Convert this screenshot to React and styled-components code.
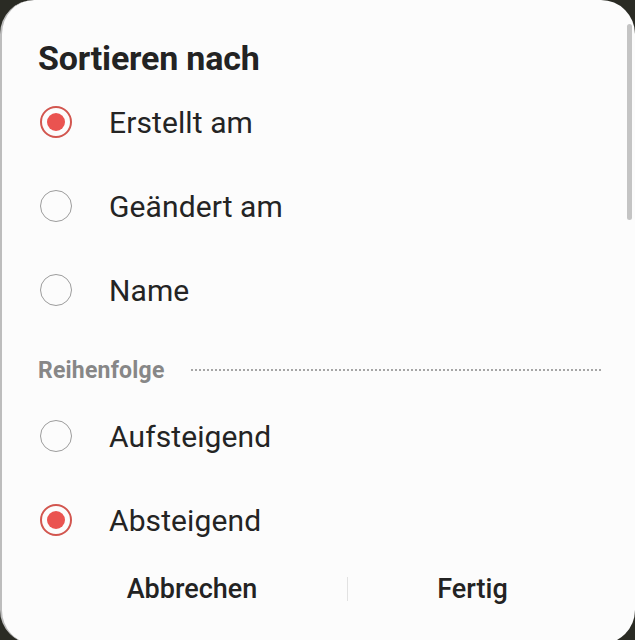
import React, { useState } from "react";
import styled, { createGlobalStyle } from "styled-components";

const Global = createGlobalStyle`
  html, body { margin: 0; padding: 0; background: #2a2b24; }
  body { width: 635px; height: 640px; overflow: hidden; font-family: Roboto, "Noto Sans", Arial, sans-serif; }
  * { box-sizing: border-box; }
`;

const Sheet = styled.div`
  position: relative;
  width: 635px;
  height: 644px;
  background: #fcfcfc;
  border-radius: 34px;
  border-left: 2px solid #bdbdbd;
  display: flex;
  flex-direction: column;
  padding: 37px 32px 0 36px;
`;

const Scrollbar = styled.div`
  position: absolute;
  right: 3px;
  top: 24px;
  width: 5px;
  height: 196px;
  border-radius: 3px;
  background: #c4c4c4;
`;

const Title = styled.h1`
  margin: 0;
  font-size: 34px;
  line-height: 43px;
  font-weight: 700;
  color: #232323;
  letter-spacing: -0.2px;
`;

const List = styled.div`
  display: flex;
  flex-direction: column;
`;

const Row = styled.label`
  display: flex;
  align-items: center;
  height: 84px;
  cursor: pointer;
  padding-left: 2px;
`;

const Radio = styled.span`
  width: 32px;
  height: 32px;
  border-radius: 50%;
  border: ${(p) => (p.$checked ? "2px solid #d2564f" : "1.6px solid #9c9c9c")};
  display: flex;
  align-items: center;
  justify-content: center;
  flex-shrink: 0;
  &::after {
    content: "";
    width: 18px;
    height: 18px;
    border-radius: 50%;
    background: #ea5350;
    display: ${(p) => (p.$checked ? "block" : "none")};
  }
`;

const RowText = styled.span`
  margin-left: 37px;
  font-size: 30px;
  color: #242424;
  letter-spacing: 0.1px;
`;

const SectionHeader = styled.div`
  height: 62px;
  padding-top: 16px;
  display: flex;
  align-items: center;
`;

const SectionTitle = styled.span`
  font-size: 23px;
  font-weight: 700;
  color: #878787;
  line-height: 46px;
  letter-spacing: 0.2px;
`;

const Dots = styled.span`
  flex: 1;
  margin-left: 25px;
  height: 2px;
  background-image: radial-gradient(circle, #a6a6a6 0.8px, transparent 1px);
  background-size: 4px 2px;
  background-repeat: repeat-x;
  margin-top: -3px;
`;

const Buttons = styled.div`
  display: grid;
  grid-template-columns: 310px 1px 1fr;
  align-items: center;
  height: 54px;
  margin-left: -1px;
  margin-right: 6px;
`;

const Btn = styled.button`
  background: none;
  border: none;
  font-family: inherit;
  font-size: 27px;
  font-weight: 500;
  color: #232323;
  height: 54px;
  cursor: pointer;
  padding: 0;
`;

const Divider = styled.span`
  width: 1px;
  height: 24px;
  background: #e2e2e2;
`;

export default function App() {
  const [sort, setSort] = useState("created");
  const [order, setOrder] = useState("desc");
  const sorts = [
    ["created", "Erstellt am"],
    ["changed", "Geändert am"],
    ["name", "Name"],
  ];
  const orders = [
    ["asc", "Aufsteigend"],
    ["desc", "Absteigend"],
  ];
  return (
    <>
      <Global />
      <Sheet>
        <Scrollbar />
        <Title>Sortieren nach</Title>
        <List>
          {sorts.map(([k, t]) => (
            <Row key={k} onClick={() => setSort(k)}>
              <Radio $checked={sort === k} />
              <RowText>{t}</RowText>
            </Row>
          ))}
        </List>
        <SectionHeader>
          <SectionTitle>Reihenfolge</SectionTitle>
          <Dots />
        </SectionHeader>
        <List>
          {orders.map(([k, t]) => (
            <Row key={k} onClick={() => setOrder(k)}>
              <Radio $checked={order === k} />
              <RowText>{t}</RowText>
            </Row>
          ))}
        </List>
        <Buttons>
          <Btn>Abbrechen</Btn>
          <Divider />
          <Btn>Fertig</Btn>
        </Buttons>
      </Sheet>
    </>
  );
}
